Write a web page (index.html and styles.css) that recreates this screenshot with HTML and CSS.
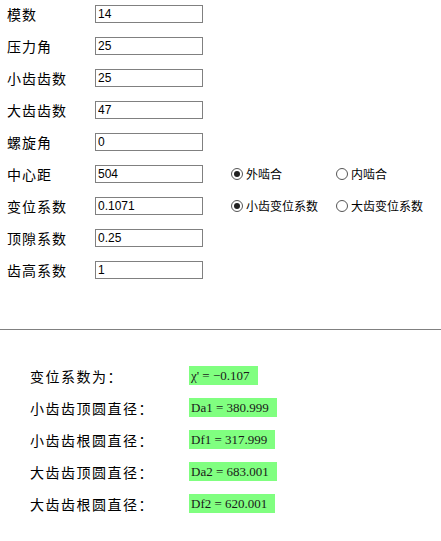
FILE: index.html
```html
<!DOCTYPE html>
<html>
<head>
<meta charset="utf-8">
<link rel="stylesheet" href="styles.css">
</head>
<body>
<div class="form">
  <div class="row"><span class="label">模数</span><input class="field" value="14"></div>
  <div class="row"><span class="label">压力角</span><input class="field" value="25"></div>
  <div class="row"><span class="label">小齿齿数</span><input class="field" value="25"></div>
  <div class="row"><span class="label">大齿齿数</span><input class="field" value="47"></div>
  <div class="row"><span class="label">螺旋角</span><input class="field" value="0"></div>
  <div class="row"><span class="label">中心距</span><input class="field" value="504">
    <div class="radios">
      <label class="radio"><span class="dot on"></span>外啮合</label>
      <label class="radio"><span class="dot"></span>内啮合</label>
    </div>
  </div>
  <div class="row"><span class="label">变位系数</span><input class="field" value="0.1071">
    <div class="radios">
      <label class="radio"><span class="dot on"></span>小齿变位系数</label>
      <label class="radio"><span class="dot"></span>大齿变位系数</label>
    </div>
  </div>
  <div class="row"><span class="label">顶隙系数</span><input class="field" value="0.25"></div>
  <div class="row"><span class="label">齿高系数</span><input class="field" value="1"></div>
</div>
<hr class="rule">
<div class="results">
  <div class="res"><span class="rlabel">变位系数为：</span><span class="val">χ' = −0.107</span></div>
  <div class="res"><span class="rlabel">小齿齿顶圆直径：</span><span class="val">Da1 = 380.999</span></div>
  <div class="res"><span class="rlabel">小齿齿根圆直径：</span><span class="val">Df1 = 317.999</span></div>
  <div class="res"><span class="rlabel">大齿齿顶圆直径：</span><span class="val">Da2 = 683.001</span></div>
  <div class="res"><span class="rlabel">大齿齿根圆直径：</span><span class="val">Df2 = 620.001</span></div>
</div>
</body>
</html>
```
FILE: styles.css
```css
html, body {
  margin: 0;
  padding: 0;
  background: #fff;
  color: #000;
  font-family: "Noto Sans CJK SC", "Noto Sans", sans-serif;
}
.form {
  padding: 5px 0 0 7px;
  display: flex;
  flex-direction: column;
  gap: 14px;
}
.row {
  display: flex;
  align-items: center;
  height: 18px;
}
.label {
  width: 88px;
  font-size: 14px;
  letter-spacing: 1px;
  line-height: 18px;
}
.field {
  box-sizing: border-box;
  width: 108px;
  height: 18px;
  margin: 0;
  padding: 0 2px;
  border: 1px solid #808080;
  font-family: "Liberation Sans", Arial, sans-serif;
  font-size: 12px;
  color: #000;
  outline: none;
}
.radios {
  display: flex;
  margin-left: 28px;
}
.radio {
  display: flex;
  align-items: center;
  width: 105px;
  font-size: 12px;
  line-height: 18px;
  gap: 3px;
}
.dot {
  box-sizing: border-box;
  width: 12px;
  height: 12px;
  border: 1px solid #555;
  border-radius: 50%;
  display: flex;
  align-items: center;
  justify-content: center;
}
.dot.on::after {
  content: "";
  width: 6px;
  height: 6px;
  border-radius: 50%;
  background: #222;
}
.rule {
  margin: 50px 0 0;
  border: 0;
  border-top: 1px solid #808080;
  height: 0;
}
.results {
  padding: 36px 0 0 30px;
  display: flex;
  flex-direction: column;
  gap: 13px;
}
.res {
  display: flex;
  align-items: center;
  height: 19px;
}
.rlabel {
  width: 159px;
  font-size: 14px;
  letter-spacing: 1.5px;
}
.val {
  background: #80ff80;
  font-family: "Liberation Serif", "Times New Roman", serif;
  font-size: 13px;
  line-height: 19px;
  padding: 0 8px 0 2px;
  color: #1a1a1a;
}
```
